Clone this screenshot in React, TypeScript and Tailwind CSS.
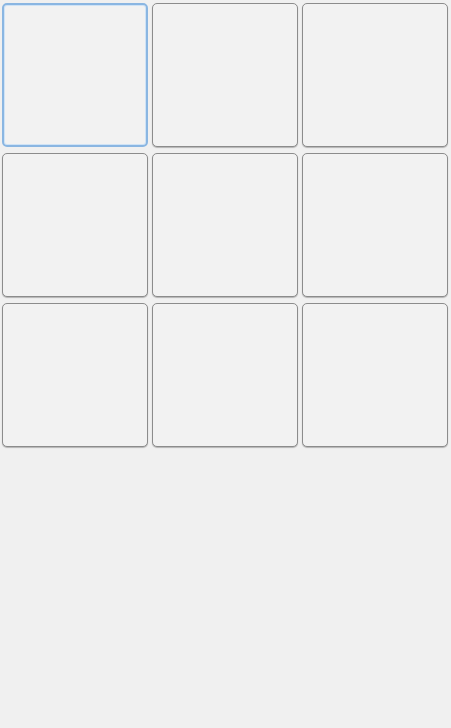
export default function App() {
  const cells = Array.from({ length: 9 }, (_, i) => i);
  return (
    <div className="min-h-screen w-full bg-[#f0f0f0] pl-[2px] pt-[3px]">
      <div className="grid grid-cols-[146px_146px_146px] auto-rows-[144px] gap-x-[4px] gap-y-[6px]">
        {cells.map((i) => (
          <button
            key={i}
            className={
              i === 0
                ? "rounded-[5px] border-2 border-[#8ab6e2] bg-[#f2f2f2] shadow-[inset_0_0_0_1px_#cfe3f6]"
                : "rounded-[5px] border border-[#8c8c8c] bg-[#f2f2f2] shadow-[0_1px_1px_rgba(0,0,0,0.25)]"
            }
          />
        ))}
      </div>
    </div>
  );
}
